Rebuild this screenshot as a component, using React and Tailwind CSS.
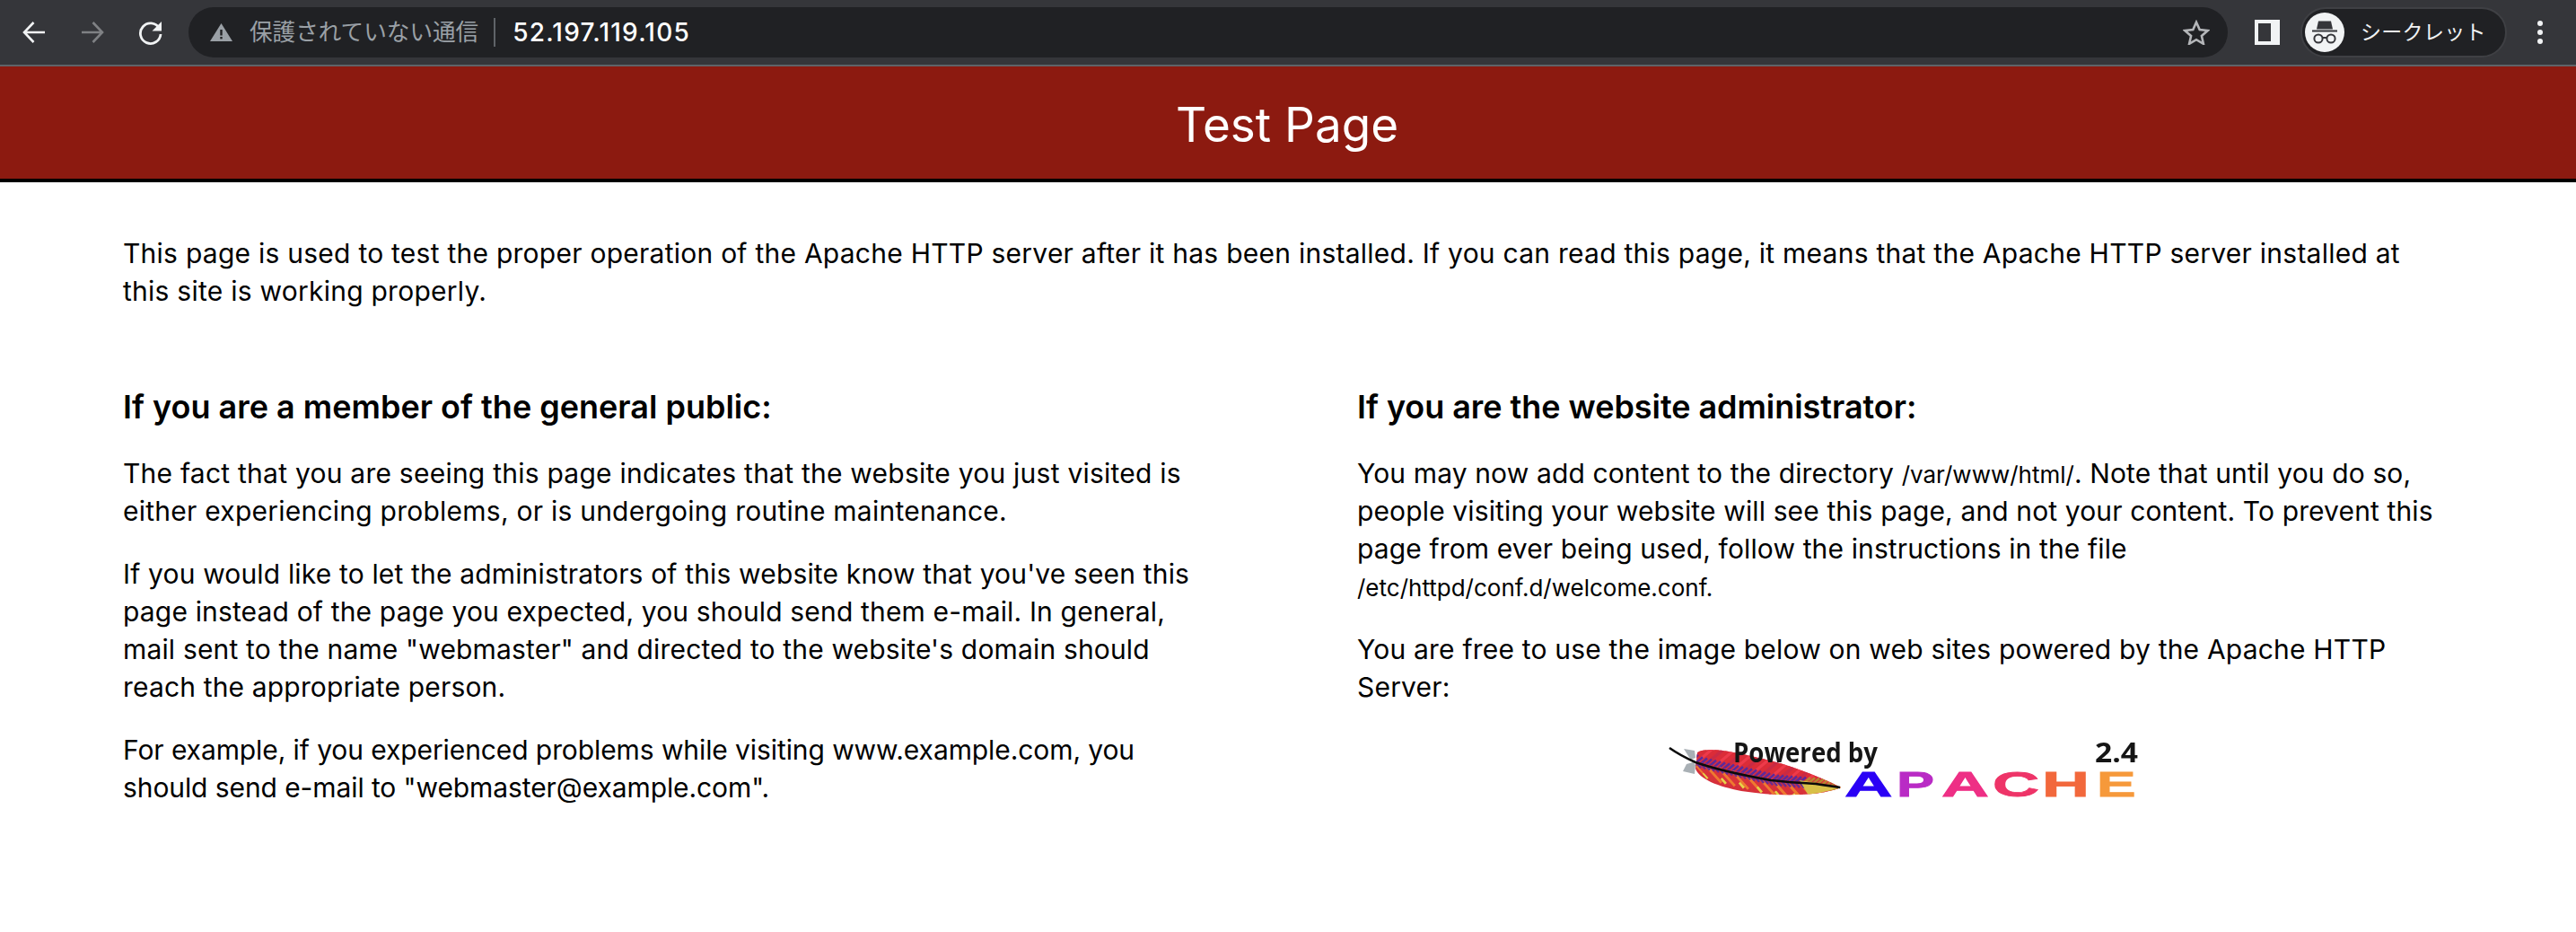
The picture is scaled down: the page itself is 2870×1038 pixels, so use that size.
import React from "react";

function Back({ color = "#f1f3f4", flip = false }) {
  return (
    <svg width="28" height="28" viewBox="0 0 28 28" fill="none" stroke={color} strokeWidth="2.6" className={flip ? "-scale-x-100" : ""}>
      <path d="M26 14H3M13.5 3 3 14l10.5 11" />
    </svg>
  );
}

function Reload() {
  return (
    <svg width="30" height="30" viewBox="0 0 30 30" fill="none">
      <path d="M24.5 10.5A11.3 11.3 0 1 0 26 17" stroke="#f1f3f4" strokeWidth="2.8" />
      <path d="M27 3v10.5H16.5z" fill="#f1f3f4" />
    </svg>
  );
}

function Warning() {
  return (
    <svg width="25" height="20" viewBox="0 0 25 20">
      <path d="M12.5 0 25 20H0z" fill="#9aa0a6" />
      <rect x="11.3" y="7" width="2.4" height="6.5" fill="#202124" />
      <rect x="11.3" y="15" width="2.4" height="2.4" fill="#202124" />
    </svg>
  );
}

function Star() {
  return (
    <svg width="30" height="28" viewBox="0 0 30 28" fill="none" stroke="#b4b6b9" strokeWidth="2.6">
      <path d="m15 2.8 3.7 8.3 9 .9-6.8 6 2 8.8-7.9-4.6-7.9 4.6 2-8.8-6.8-6 9-.9z" />
    </svg>
  );
}

function Incognito() {
  return (
    <svg width="44" height="44" viewBox="0 0 44 44">
      <circle cx="22" cy="22" r="22" fill="#f1f3f4" />
      <path d="M15 9.5h14l2 9H13z" fill="#35363a" />
      <rect x="8" y="19.5" width="28" height="2" fill="#35363a" />
      <circle cx="15" cy="29" r="4.6" fill="none" stroke="#35363a" strokeWidth="2" />
      <circle cx="29" cy="29" r="4.6" fill="none" stroke="#35363a" strokeWidth="2" />
      <path d="M19.5 28h5" stroke="#35363a" strokeWidth="2" />
    </svg>
  );
}

function spineY(x) {
  if (x < 34) return 7 + (x - 5) * 0.55;
  if (x < 118) return 23 + (x - 34) * 0.238;
  if (x < 168) return 43 + (x - 118) * 0.08;
  return 47 + (x - 168) * 0.14;
}

function ApacheLogo() {
  const letters = [
    ["A", 200, 1.95, "#2a00f5"],
    ["P", 258, 1.66, "#b92bc5"],
    ["A", 308, 1.93, "#ee2f85"],
    ["C", 365, 1.9, "#ee3468"],
    ["H", 420, 1.93, "#f2683c"],
    ["E", 481, 1.72, "#f6993a"],
  ];
  const strokes = [];
  for (let i = 0; i < 34; i++) {
    const x = 30 + i * 5;
    const y = spineY(x);
    const top = i % 4 === 1 ? "#ee3a4a" : i % 4 === 3 ? "#c92a45" : "#dc2c38";
    strokes.push(<path key={"t" + i} d={`M${x} ${y}L${x + 26} ${y - 22}`} stroke={top} strokeWidth="3.2" />);
    strokes.push(<path key={"p" + i} d={`M${x} ${y}L${x + 7} ${y - 6}`} stroke={x > 150 ? "#b8862e" : "#5c2a9a"} strokeWidth="2.6" />);
    const bot = i % 3 === 0 ? "#ee7a30" : "#d8333a";
    strokes.push(<path key={"b" + i} d={`M${x} ${y}L${x + 18} ${y + 20}`} stroke={bot} strokeWidth="3.2" />);
    strokes.push(<path key={"q" + i} d={`M${x} ${y}L${x + 5} ${y + 6}`} stroke={x > 150 ? "#b8862e" : "#6a2c90"} strokeWidth="2.4" />);
    if (i % 4 === 0) strokes.push(<path key={"y" + i} d={`M${x + 13} ${y + 14}L${x + 18} ${y + 20}`} stroke="#e6d44a" strokeWidth="3" />);
  }
  return (
    <svg width="535" height="65" viewBox="0 0 535 65">
      <defs>
        <clipPath id="feather">
          <path d="M36 12C46 6 70 10 100 17 135 24 170 38 196 51 175 60 130 62 85 55 60 50 38 42 34 30z" />
        </clipPath>
      </defs>
      <g className="blur-[0.7px]">
        <path d="M21 8 33 10 34 18 29 20 34 26 33 36 20 33 24 25 31 23 26 16z" fill="#a9b0b5" />
        <g clipPath="url(#feather)">
          <rect x="30" y="5" width="170" height="60" fill="#d62f3a" />
          {strokes}
          <path d="M150 43 198 51 160 60z" fill="#d8c048" />
        </g>
        <path d="M5 7C15 14 25 19 34 23 60 32 90 38 118 43 135 45 150 46 168 47L195 51" fill="none" stroke="#0a0a0a" strokeWidth="2.6" />
        <text x="76" y="23" fontFamily="'Open Sans', sans-serif" fontWeight="700" fontSize="30" fill="#151515" textLength="161" lengthAdjust="spacingAndGlyphs">Powered by</text>
        <text x="479" y="23" fontFamily="'Open Sans', sans-serif" fontWeight="700" fontSize="30" fill="#151515" textLength="48" lengthAdjust="spacingAndGlyphs">2.4</text>
        {letters.map(([l, x, s, c], i) => (
          <text key={i} transform={`translate(${x} 61) scale(${s} 1)`} fontFamily="'Liberation Sans', sans-serif" fontWeight="700" fontSize="38" fill={c} stroke={c} strokeWidth="0.8">{l}</text>
        ))}
      </g>
    </svg>
  );
}

function Code({ children }) {
  return <span className="text-[26px] leading-none tracking-normal">{children}</span>;
}

export default function App() {
  return (
    <div className="min-h-[1038px] bg-white font-['Inter','Noto_Sans_CJK_JP',sans-serif] text-[30px] leading-[42px] text-black">
      <div className="flex h-[74px] items-start border-b-2 border-[#5f6368] bg-[#35363a] pt-2">
        <div className="flex h-14 w-[210px] items-center">
          <div className="ml-[24px]"><Back /></div>
          <div className="ml-[37px]"><Back color="#7f8184" flip /></div>
          <div className="ml-[36px]"><Reload /></div>
        </div>
        <div className="flex h-14 w-[2272px] items-center rounded-full bg-[#202124] pl-6 pr-5">
          <Warning />
          <span className="ml-[19px] text-[25.6px] leading-none text-[#9aa0a6]">保護されていない通信</span>
          <span className="ml-[17px] h-8 w-0.5 bg-[#5f6368]" />
          <span className="ml-[19px] text-[28px] font-medium leading-none tracking-[1.2px] text-white">52.197.119.105</span>
          <div className="ml-auto flex"><Star /></div>
        </div>
        <div className="ml-[30px] mt-[14px] flex h-7 w-7 bg-[#f1f3f4] py-1 pl-1 pr-2.5">
          <div className="h-full w-full bg-[#35363a]" />
        </div>
        <div className="ml-[23px] flex h-14 w-[230px] items-center rounded-full border-2 border-[#3f4044] bg-[#202124] pl-[3px]">
          <Incognito />
          <span className="ml-[18px] text-[23px] leading-none tracking-[0.3px] text-[#f1f3f4]">シークレット</span>
        </div>
        <div className="ml-[34px] mt-[15px] flex flex-col gap-1">
          <span className="h-1.5 w-1.5 rounded-full bg-[#f1f3f4]" />
          <span className="h-1.5 w-1.5 rounded-full bg-[#f1f3f4]" />
          <span className="h-1.5 w-1.5 rounded-full bg-[#f1f3f4]" />
        </div>
      </div>

      <div className="flex h-[129px] items-center justify-center border-b-4 border-black bg-[#8c1a10] pt-1.5">
        <h1 className="-ml-0.5 text-[53px] font-normal leading-none text-white">Test Page</h1>
      </div>

      <div className="px-[137px] pt-[58px]">
        <p className="tracking-[0.25px]">This page is used to test the proper operation of the Apache HTTP server after it has been installed. If you can read this page, it means that the Apache HTTP server installed at this site is working properly.</p>
        <div className="mt-[87px] grid grid-cols-2 gap-[154px]">
          <div>
            <h2 className="mb-[32px] text-[36px] font-semibold leading-[42px]">If you are a member of the general public:</h2>
            <p className="mb-7 tracking-[0.24px]">The fact that you are seeing this page indicates that the website you just visited is either experiencing problems, or is undergoing routine maintenance.</p>
            <p className="mb-7 tracking-[0.16px]">If you would like to let the administrators of this website know that you've seen this page instead of the page you expected, you should send them e-mail. In general, mail sent to the name "webmaster" and directed to the website's domain should reach the appropriate person.</p>
            <p className="-tracking-[0.09px]">For example, if you experienced problems while visiting www.example.com, you should send e-mail to "webmaster@example.com".</p>
          </div>
          <div>
            <h2 className="mb-[32px] text-[36px] font-semibold leading-[42px] -tracking-[0.05px]">If you are the website administrator:</h2>
            <p className="mb-7 tracking-[0.13px]">You may now add content to the directory <Code>/var/www/html/</Code>. Note that until you do so, people visiting your website will see this page, and not your content. To prevent this page from ever being used, follow the instructions in the file <Code>/etc/httpd/conf.d/welcome.conf.</Code></p>
            <p className="tracking-[0.2px]">You are free to use the image below on web sites powered by the Apache HTTP Server:</p>
            <div className="flex justify-center pt-[40px]"><ApacheLogo /></div>
          </div>
        </div>
      </div>
    </div>
  );
}
